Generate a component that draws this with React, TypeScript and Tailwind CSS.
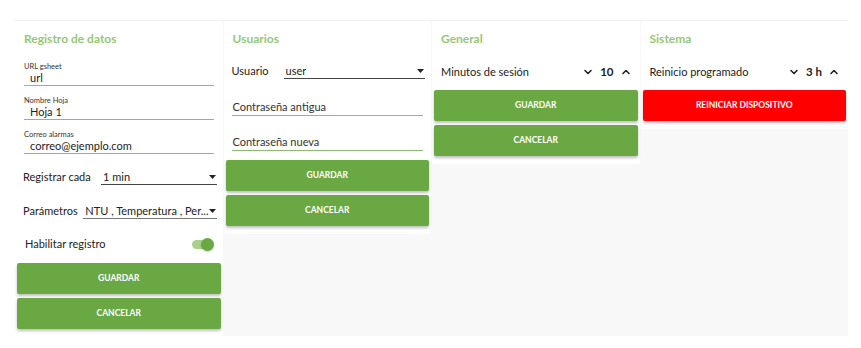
import { ChevronDown, ChevronUp } from 'lucide-react'

const font = { fontFamily: 'Lato, "Open Sans", sans-serif' }

function Caret() {
  return (
    <svg width="7" height="4" viewBox="0 0 7 4" className="shrink-0">
      <path d="M0 0h7L3.5 4z" fill="#222" />
    </svg>
  )
}

function Btn({ label, red }: { label: string; red?: boolean }) {
  return (
    <button
      className={[
        'mx-[2px] h-[31px] rounded-[2px] text-[8.5px] font-bold uppercase text-white shadow-[0_2px_3px_rgba(0,0,0,0.25)]',
        red ? 'bg-[#ff0000]' : 'bg-[#6aa843]'
      ].join(' ')}
    >
      {label}
    </button>
  )
}

function TextField({ label, value }: { label: string; value: string }) {
  return (
    <div className="mx-[9px] border-b border-[#8cbf6a] pb-[1px]">
      <div className="text-[7.5px] leading-[9px] text-[#333]">{label}</div>
      <div className="pl-[6px] text-[11px] leading-[13px] text-[#222]">{value}</div>
    </div>
  )
}

function PlainField({ value }: { value: string }) {
  return (
    <div className="mx-[8px] border-b border-[#8cbf6a] pb-[1px] pl-[1px] text-[11px] leading-[14px] text-[#333]">{value}</div>
  )
}

function SelectRow({ label, value, labelW, line }: { label: string; value: string; labelW: string; line?: string }) {
  return (
    <div className="flex items-end pl-[8px] pr-[6px] text-[11px] leading-[14px] text-[#222]">
      <div className={labelW + ' pb-[1px]'}>{label}</div>
      <div className={['flex flex-1 items-center justify-between border-b pl-[2px] pr-[1px]', line ?? 'border-[#444]'].join(' ')}>
        <span className="truncate">{value}</span>
        <Caret />
      </div>
    </div>
  )
}

function Stepper({ label, value }: { label: string; value: string }) {
  return (
    <div className="mt-[5px] flex h-[20px] items-center justify-between pl-[9px] pr-[8px] text-[11px] text-[#222]">
      <span>{label}</span>
      <div className="flex items-center gap-[6px]">
        <ChevronDown size={12} strokeWidth={3.2} />
        <span className="text-[11.5px] font-bold">{value}</span>
        <ChevronUp size={12} strokeWidth={3.2} />
      </div>
    </div>
  )
}

function Title({ children }: { children: string }) {
  return <h2 className="h-[36px] pl-[9px] pt-[9px] text-[12px] font-bold text-[#95c776]">{children}</h2>
}

export default function App() {
  return (
    <div className="h-[348px] w-[861px] bg-white pl-[15px] pt-[20px]" style={font}>
      <div className="grid h-[316px] w-[833px] grid-cols-4 items-start gap-px border-t border-[#f0f0f0] bg-[#f8f8f8]">
        <section className="flex flex-col bg-white pb-[8px]">
          <Title>Registro de datos</Title>
          <div className="mt-[5px] flex flex-col gap-[10px]">
            <TextField label="URL gsheet" value="url" />
            <TextField label="Nombre Hoja" value="Hoja 1" />
            <TextField label="Correo alarmas" value="correo@ejemplo.com" />
          </div>
          <div className="mt-[16px]">
            <SelectRow label="Registrar cada" value="1 min" labelW="w-[78px]" />
          </div>
          <div className="mt-[19px]">
            <SelectRow label="Parámetros" value="NTU , Temperatura , Per..." labelW="w-[67px]" line="border-[#777]" />
          </div>
          <div className="mt-[17px] flex items-center justify-between pl-[10px] pr-[11px] text-[11px] text-[#222]">
            <span>Habilitar registro</span>
            <div className="relative h-[9px] w-[20px] rounded-full bg-[#a9d18e]">
              <div className="absolute -right-[2px] -top-[2px] h-[13px] w-[13px] rounded-full bg-[#6aa843] shadow-[0_1px_2px_rgba(0,0,0,0.2)]" />
            </div>
          </div>
          <div className="mt-[10px] flex flex-col gap-[4px]">
            <Btn label="Guardar" />
            <Btn label="Cancelar" />
          </div>
        </section>

        <section className="flex flex-col bg-white pb-[8px]">
          <Title>Usuarios</Title>
          <div className="mt-[7px]">
            <SelectRow label="Usuario" value="user" labelW="w-[52px]" />
          </div>
          <div className="mt-[21px] flex flex-col gap-[19px]">
            <PlainField value="Contraseña antigua" />
            <PlainField value="Contraseña nueva" />
          </div>
          <div className="mt-[9px] flex flex-col gap-[4px]">
            <Btn label="Guardar" />
            <Btn label="Cancelar" />
          </div>
        </section>

        <section className="flex flex-col bg-white pb-[8px]">
          <Title>General</Title>
          <Stepper label="Minutos de sesión" value="10" />
          <div className="mt-[8px] flex flex-col gap-[4px]">
            <Btn label="Guardar" />
            <Btn label="Cancelar" />
          </div>
        </section>

        <section className="flex flex-col bg-white pb-[8px]">
          <Title>Sistema</Title>
          <Stepper label="Reinicio programado" value="3 h" />
          <div className="mt-[8px] flex flex-col">
            <Btn label="Reiniciar dispositivo" red />
          </div>
        </section>
      </div>
    </div>
  )
}
